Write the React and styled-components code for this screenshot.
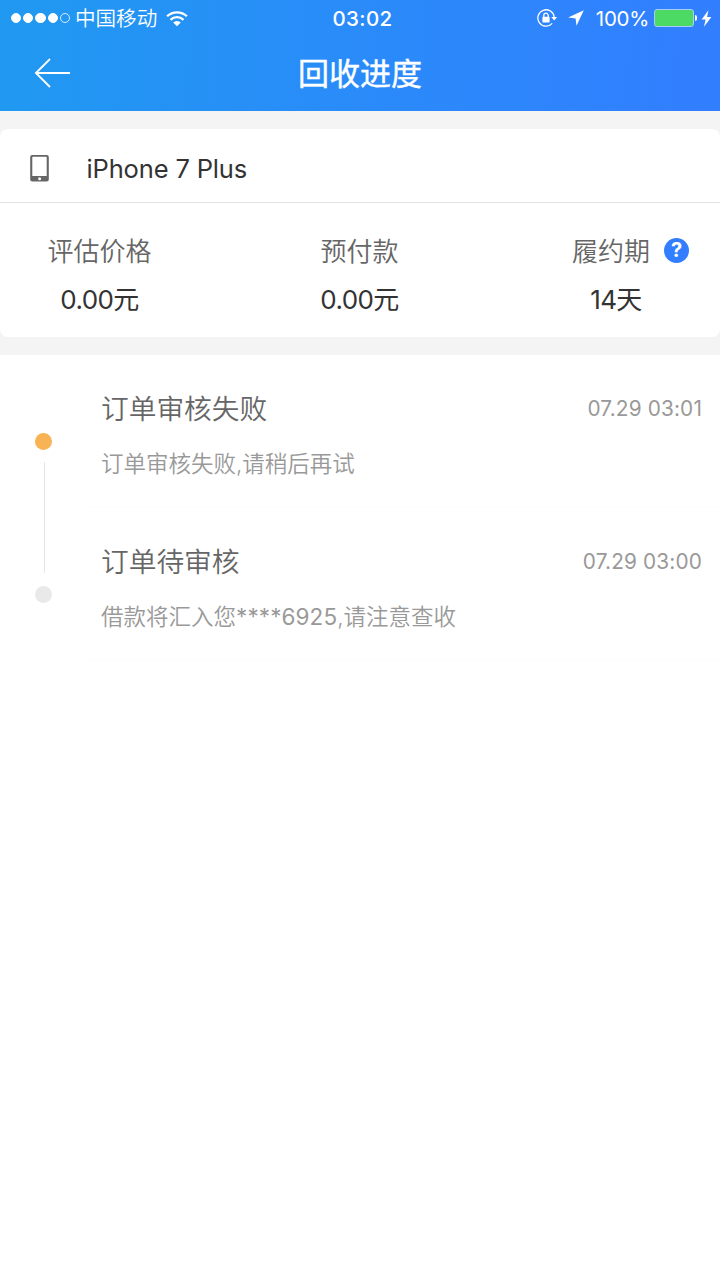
import React from 'react';
import styled, { createGlobalStyle } from 'styled-components';

const orderInfo = {
  device: 'iPhone 7 Plus',
  price: '0.00元',
  prepaid: '0.00元',
  period: '14天',
};

const records = [
  {
    title: '订单审核失败',
    time: '07.29 03:01',
    desc: '订单审核失败,请稍后再试',
    active: true,
  },
  {
    title: '订单待审核',
    time: '07.29 03:00',
    desc: '借款将汇入您',
    account: '****6925',
    descEnd: ',请注意查收',
    active: false,
  },
];

const StatusBar = () => (
  <StatusBarContainer>
    <StatusLeft>
      <SignalDots>
        {[1, 2, 3, 4, 5].map((n) => (
          <SignalDot key={n} $empty={n === 5} />
        ))}
      </SignalDots>
      <Carrier>中国移动</Carrier>
      <svg width="22" height="17" viewBox="0 0 22 17">
        <g fill="none" stroke="#fff" strokeWidth="2.3">
          <path d="M1.1 6.3a14.2 14.2 0 0 1 19.8 0" />
          <path d="M4.5 9.8a9.4 9.4 0 0 1 13 0" />
        </g>
        <path d="M7.2 12.4a5.5 5.5 0 0 1 7.6 0L11 16.3z" fill="#fff" />
      </svg>
    </StatusLeft>
    <Clock>03:02</Clock>
    <StatusRight>
      <svg width="21" height="18" viewBox="0 0 21 18">
        <path
          d="M15.2 14.4A8.2 8.2 0 1 1 17.2 8.2"
          fill="none"
          stroke="#fff"
          strokeWidth="1.3"
        />
        <path d="M14.3 8h5.8l-2.9 3.4z" fill="#fff" />
        <rect x="5.4" y="7.8" width="7.2" height="5.6" rx="0.6" fill="#fff" />
        <path
          d="M6.8 8.4V6.4a2.2 2.2 0 0 1 4.4 0v2"
          fill="none"
          stroke="#fff"
          strokeWidth="1.3"
        />
      </svg>
      <LocationArrow width="16" height="16" viewBox="0 0 16 16">
        <path d="M15.8 0.2L0.2 7.4l7.4 1.1 0.9 7.3z" fill="#fff" />
      </LocationArrow>
      <Percent>100%</Percent>
      <Battery />
      <BatteryCap />
      <svg width="11" height="17" viewBox="0 0 11 17">
        <path d="M7.4 0.3L0.6 9.6h4L3 16.8 10.4 7H6.1z" fill="#fff" />
      </svg>
    </StatusRight>
  </StatusBarContainer>
);

const NavBar = () => (
  <NavBarContainer>
    <BackButton aria-label="返回">
      <svg width="36" height="30" viewBox="0 0 36 30">
        <path
          d="M16 1L1.9 15l14.1 14M1.9 15H36"
          fill="none"
          stroke="#fff"
          strokeWidth="1.8"
        />
      </svg>
    </BackButton>
    <NavTitle>回收进度</NavTitle>
    <span />
  </NavBarContainer>
);

const OrderCard = ({ info }) => (
  <Card>
    <DeviceRow>
      <svg width="19" height="28" viewBox="0 0 19 28">
        <path
          fill="#666"
          fillRule="evenodd"
          d="M2.2 1h14.6A2 2 0 0 1 18.8 3v22.6a2 2 0 0 1-2 2H2.2a2 2 0 0 1-2-2V3a2 2 0 0 1 2-2zM2.3 3.4v18q0 .6.6.6h13.2q.6 0 .6-.6v-18q0-.6-.6-.6H2.9q-.6 0-.6.6z"
        />
        <circle cx="9.6" cy="24.8" r="1.5" fill="#fff" />
      </svg>
      <DeviceName>{info.device}</DeviceName>
    </DeviceRow>
    <Stats>
      <Stat>
        <StatLabel>评估价格</StatLabel>
        <StatValue>{info.price}</StatValue>
      </Stat>
      <Stat>
        <StatLabel>预付款</StatLabel>
        <StatValue>{info.prepaid}</StatValue>
      </Stat>
      <Stat>
        <StatLabel $withHelp>
          履约期
          <HelpIcon>?</HelpIcon>
        </StatLabel>
        <StatValue>{info.period}</StatValue>
      </Stat>
    </Stats>
  </Card>
);

const TimelineItem = ({ record, last }) => (
  <ItemRow>
    <Rail>
      <Dot $active={record.active} />
      {!last && <RailLine />}
    </Rail>
    <ItemBody>
      <ItemHead>
        <ItemTitle>{record.title}</ItemTitle>
        <ItemTime>{record.time}</ItemTime>
      </ItemHead>
      <ItemDesc>
        {record.desc}
        {record.account && <Account>{record.account}</Account>}
        {record.descEnd}
      </ItemDesc>
    </ItemBody>
  </ItemRow>
);

const App = () => (
  <>
    <GlobalStyle />
    <Page>
      <Header>
        <StatusBar />
        <NavBar />
      </Header>
      <OrderCard info={orderInfo} />
      <Timeline>
        {records.map((record, i) => (
          <TimelineItem
            key={record.time}
            record={record}
            last={i === records.length - 1}
          />
        ))}
      </Timeline>
    </Page>
  </>
);

const GlobalStyle = createGlobalStyle`
  * {
    box-sizing: border-box;
  }

  body {
    margin: 0;
    font-family: Inter, 'Noto Sans CJK SC', sans-serif;
    background: #f4f4f4;
  }

  svg {
    display: block;
    flex-shrink: 0;
  }
`;

const Page = styled.div`
  display: flex;
  flex-direction: column;
  width: 720px;
  height: 1280px;
  overflow: hidden;
  background: #f4f4f4;
`;

const Header = styled.header`
  height: 111px;
  color: #fff;
  background: linear-gradient(92deg, #2099f1 0%, #2a8bf9 50%, #327eff 100%);
`;

const StatusBarContainer = styled.div`
  display: grid;
  grid-template-columns: 1fr auto 1fr;
  align-items: center;
  height: 36px;
  padding: 0 8px 0 11px;
`;

const StatusLeft = styled.div`
  display: flex;
  align-items: center;
`;

const SignalDots = styled.div`
  display: flex;
  gap: 2px;
  margin-right: 5px;
`;

const SignalDot = styled.span`
  width: 10.2px;
  height: 10.2px;
  border-radius: 50%;
  border: 1px solid ${(props) => (props.$empty ? 'rgba(255, 255, 255, 0.8)' : '#fff')};
  background: ${(props) => (props.$empty ? 'transparent' : '#fff')};
`;

const Carrier = styled.span`
  margin-right: 9px;
  padding-top: 2px;
  font-size: 20.6px;
  line-height: 34px;
  font-weight: 350;
`;

const Clock = styled.span`
  padding: 1px 0 0 2px;
  font-size: 20.5px;
  font-weight: 500;
  letter-spacing: 0.4px;
  line-height: 35px;
`;

const StatusRight = styled.div`
  display: flex;
  align-items: center;
  justify-content: flex-end;
`;

const LocationArrow = styled.svg`
  margin: 0 12px 0 10px;
`;

const Percent = styled.span`
  margin-right: 5px;
  padding-top: 1px;
  font-size: 20.5px;
  line-height: 35px;
  letter-spacing: -0.3px;
`;

const Battery = styled.span`
  width: 40px;
  height: 18px;
  border: 1px solid #a5cdf5;
  border-radius: 3px;
  background: #4cd964;
`;

const BatteryCap = styled.span`
  width: 2px;
  height: 6px;
  margin: 0 4px 0 1px;
  border-radius: 0 2px 2px 0;
  background: #fff;
`;

const NavBarContainer = styled.div`
  display: grid;
  grid-template-columns: 1fr auto 1fr;
  align-items: center;
  height: 75px;
  padding: 0 34px;
`;

const BackButton = styled.button`
  width: 36px;
  padding: 0 0 2px;
  border: none;
  background: none;
`;

const NavTitle = styled.h1`
  margin: 0;
  font-size: 31px;
  line-height: 75px;
  font-weight: 400;
  -webkit-text-stroke: 0.4px #fff;
`;

const Card = styled.section`
  height: 208px;
  margin: 18px 0;
  border-radius: 8px;
  background: #fff;
`;

const DeviceRow = styled.div`
  display: flex;
  align-items: center;
  height: 74px;
  padding: 4px 30px 0;
  border-bottom: 1px solid #e2e2e2;
`;

const DeviceName = styled.span`
  margin-left: 37.5px;
  padding-top: 1px;
  color: #333;
  font-size: 25.5px;
  letter-spacing: -0.15px;
`;

const Stats = styled.div`
  display: grid;
  grid-template-columns: 199px 321px 192px;
  padding-top: 22px;
`;

const Stat = styled.div`
  text-align: center;
`;

const StatLabel = styled.div`
  display: flex;
  align-items: center;
  justify-content: center;
  height: 49px;
  padding-left: ${(props) => (props.$withHelp ? '29px' : '0')};
  color: #666;
  font-size: 26px;
  font-weight: 350;
`;

const HelpIcon = styled.span`
  width: 25px;
  height: 25px;
  margin: 1px 0 0 14px;
  border-radius: 50%;
  background: #327eff;
  color: #fff;
  font-size: 20px;
  line-height: 25px;
  font-weight: 700;
  text-align: center;
`;

const StatValue = styled.div`
  padding-top: 1px;
  color: #333;
  font-size: 26px;
  letter-spacing: -0.6px;
  line-height: 50px;
`;

const Timeline = styled.section`
  display: flex;
  flex-direction: column;
  flex: 1;
  gap: 21px;
  padding-top: 20px;
  background: #fff;
`;

const ItemRow = styled.article`
  display: flex;
  height: 132px;
`;

const Rail = styled.div`
  display: flex;
  flex-direction: column;
  align-items: center;
  width: 87px;
  padding-top: 58px;
`;

const Dot = styled.span`
  flex-shrink: 0;
  width: 17px;
  height: 17px;
  border-radius: 50%;
  background: ${(props) => (props.$active ? '#f8b354' : '#e9e9e9')};
`;

const RailLine = styled.span`
  flex-shrink: 0;
  width: 1px;
  height: 111px;
  margin: 12px 0 0 2px;
  background: #e6e6e6;
`;

const ItemBody = styled.div`
  flex: 1;
  padding: 5px 18px 0 14px;
  border-bottom: 1px solid #fcfcfc;
`;

const ItemHead = styled.div`
  display: flex;
  align-items: center;
  justify-content: space-between;
  height: 54px;
`;

const ItemTitle = styled.h2`
  margin: 0;
  color: #666;
  font-size: 27.7px;
  font-weight: 350;
`;

const ItemTime = styled.time`
  padding-top: 2px;
  color: #999;
  font-size: 20.8px;
  letter-spacing: 0.15px;
`;

const ItemDesc = styled.p`
  margin: 0;
  color: #999;
  font-size: 22.5px;
  line-height: 59px;
  font-weight: 350;
`;

const Account = styled.span`
  font-weight: 400;
  letter-spacing: 0.1px;
`;

export default App;
